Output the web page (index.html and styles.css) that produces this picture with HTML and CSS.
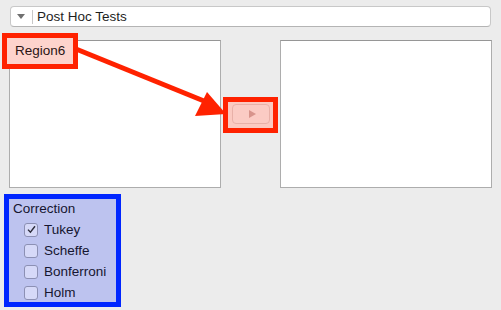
FILE: index.html
```html
<!DOCTYPE html>
<html lang="en">
<head>
    <meta charset="UTF-8">
    <title>Post Hoc Tests</title>
    <link rel="stylesheet" href="styles.css">
</head>
<body>
    <div class="dropdown">
        <span class="caret"></span>
        <span class="divider"></span>
        <span class="dropdown-label">Post Hoc Tests</span>
    </div>

    <div class="panels">
        <div class="list-box">
            <div class="region-tag">Region6</div>
        </div>
        <div class="mid">
            <div class="btn-mark">
                <button class="move-btn"><span class="play"></span></button>
            </div>
        </div>
        <div class="list-box right"></div>
    </div>

    <div class="group">
        <div class="group-title">Correction</div>
        <label class="check-row"><span class="box checked">
            <svg width="11" height="11" viewBox="0 0 11 11"><path d="M2 5.6 L4.4 8.2 L9 2.2" fill="none" stroke="#2c2c3a" stroke-width="1.4"/></svg>
        </span>Tukey</label>
        <label class="check-row"><span class="box"></span>Scheffe</label>
        <label class="check-row"><span class="box"></span>Bonferroni</label>
        <label class="check-row"><span class="box"></span>Holm</label>
    </div>

    <svg class="arrow" width="501" height="310" viewBox="0 0 501 310">
        <line x1="76" y1="49" x2="204" y2="101" stroke="#ff2200" stroke-width="5"/>
        <polygon points="207,92 195,116 226,114" fill="#ff2200"/>
    </svg>
</body>
</html>
```

FILE: styles.css
```css
* {
    margin: 0;
    padding: 0;
    box-sizing: border-box;
}

body {
    width: 501px;
    height: 310px;
    background: #ececec;
    font-family: 'Liberation Sans', Arial, sans-serif;
    font-size: 13px;
    color: #1e1e1e;
    position: relative;
    overflow: hidden;
    padding-top: 6px;
}

.dropdown {
    margin: 0 10px;
    height: 21px;
    background: #ffffff;
    border: 1px solid #c8c8c8;
    border-bottom-color: #b4b4b4;
    border-radius: 4px;
    display: flex;
    align-items: center;
}

.caret {
    width: 0;
    height: 0;
    margin-left: 6px;
    border-left: 4px solid transparent;
    border-right: 4px solid transparent;
    border-top: 5px solid #707070;
}

.divider {
    width: 1px;
    height: 14px;
    background: #c8c8c8;
    margin-left: 7px;
}

.dropdown-label {
    margin-left: 4px;
    font-size: 13.5px;
}

.panels {
    display: flex;
    margin-top: 13px;
    padding: 0 9px;
    height: 148px;
}

.list-box {
    width: 212px;
    background: #ffffff;
    border: 1px solid #adadad;
    border-top-color: #969696;
    position: relative;
}

.list-box.right {
    width: 212px;
}

.region-tag {
    position: absolute;
    left: -8px;
    top: -8px;
    width: 76px;
    height: 36px;
    border: 5px solid #ff2200;
    background: #fdd3cc;
    padding: 5px 0 0 8px;
    color: #2a1414;
    font-size: 13.5px;
}

.mid {
    width: 59px;
    display: flex;
    align-items: center;
    justify-content: center;
    padding-top: 2px;
}

.btn-mark {
    width: 55px;
    height: 36px;
    border: 5px solid #ff2200;
    background: #fbc9c1;
    padding: 2px 3px 4px 4px;
}

.move-btn {
    width: 38px;
    height: 20px;
    border: 1px solid #e8b0a8;
    border-radius: 4px;
    background: #fbcbc4;
    display: flex;
    align-items: center;
    justify-content: center;
}

.play {
    width: 0;
    height: 0;
    border-top: 4px solid transparent;
    border-bottom: 4px solid transparent;
    border-left: 7px solid #d8948c;
    margin-left: 2px;
}

.group {
    margin: 6px 0 0 4px;
    width: 117px;
    height: 113px;
    border: 5px solid #0026ff;
    background: #bdc3ef;
    padding: 2px 0 0 4px;
    color: #161630;
}

.group-title {
    font-size: 13.5px;
    height: 18px;
}

.check-row {
    display: flex;
    align-items: center;
    height: 21px;
    padding-left: 11px;
    font-size: 13.5px;
}

.box {
    width: 14px;
    height: 14px;
    border: 1px solid #8c90b4;
    border-radius: 3px;
    background: #d6d9f8;
    margin-right: 6px;
    display: flex;
    align-items: center;
    justify-content: center;
}

.arrow {
    position: absolute;
    left: 0;
    top: 0;
    pointer-events: none;
}
```
